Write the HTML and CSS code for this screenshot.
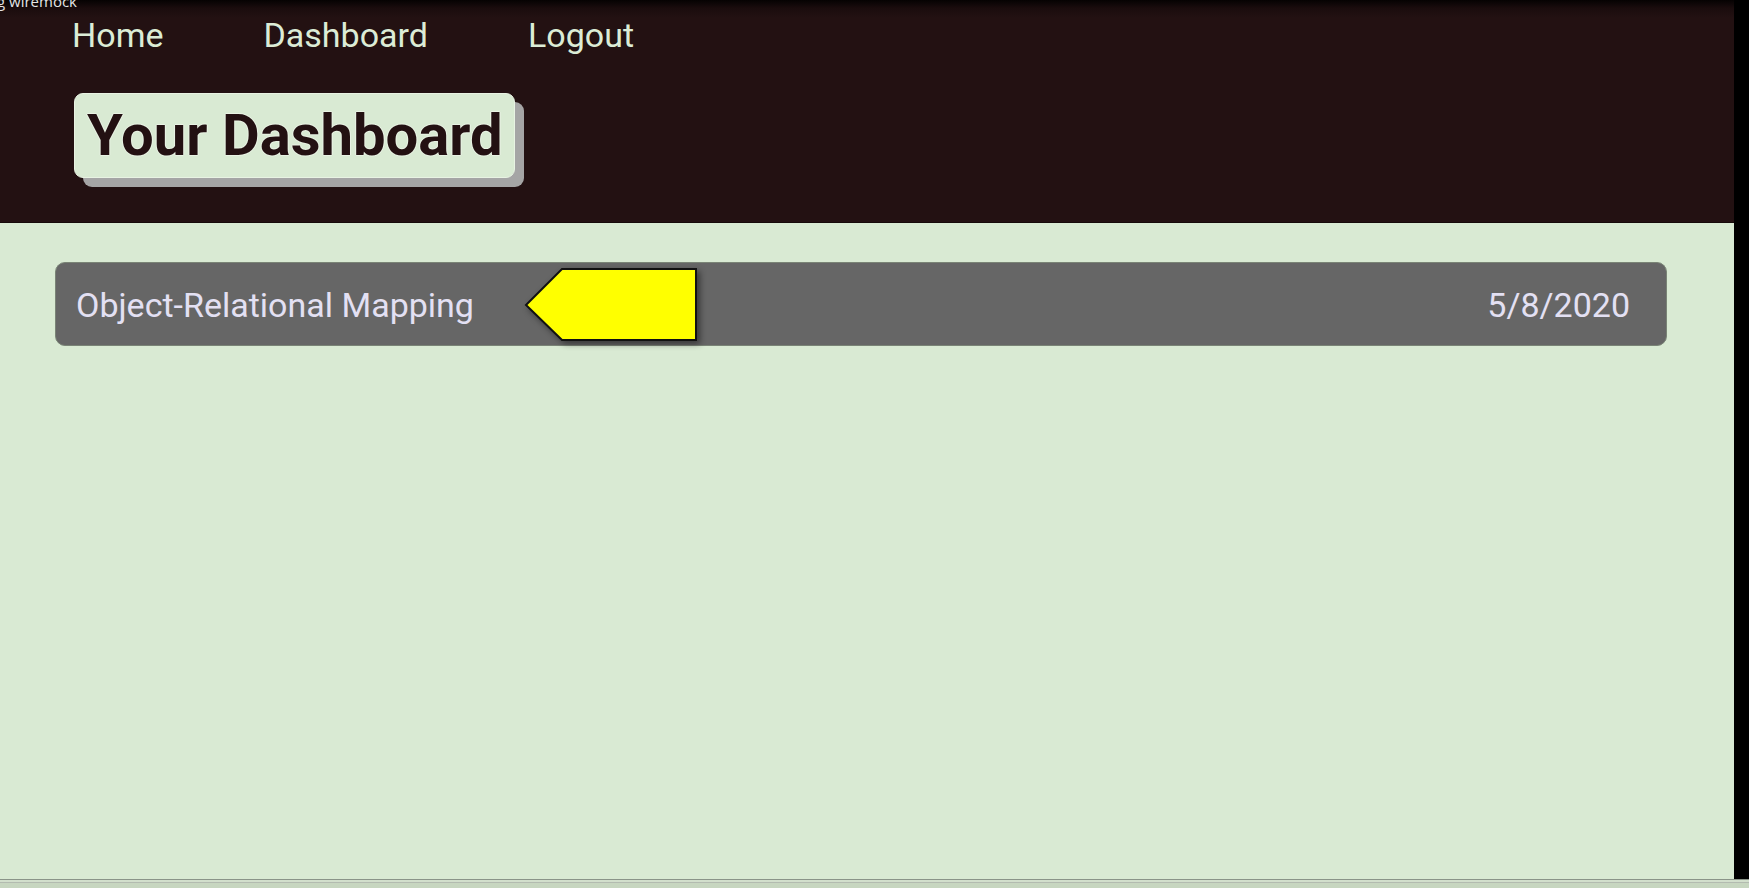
FILE: index.html
```html
<!DOCTYPE html>
<html lang="en">
<head>
<meta charset="utf-8">
<title>Your Dashboard</title>
<link rel="stylesheet" href="styles.css">
</head>
<body>
<div class="screen">
  <div class="window">
    <div class="app">
      <header class="header">
        <span class="caption">g wiremock</span>
        <nav class="nav">
          <a class="nav-link" href="#">Home</a>
          <a class="nav-link" href="#">Dashboard</a>
          <a class="nav-link" href="#">Logout</a>
        </nav>
        <h1 class="title">Your Dashboard</h1>
      </header>
      <main class="content">
        <div class="row">
          <span class="row-name">Object-Relational Mapping</span>
          <span class="row-date">5/8/2020</span>
          <svg class="pointer" width="176" height="78" viewBox="0 0 176 78">
            <polygon points="2,38 38,2 172,2 172,73 38,73" fill="#ffff00" stroke="#111" stroke-width="2" stroke-linejoin="miter"/>
          </svg>
        </div>
      </main>
    </div>
    <div class="strip"></div>
  </div>
  <div class="bottom-edge"></div>
</div>
</body>
</html>
```

FILE: styles.css
```css
html, body {
  margin: 0;
  padding: 0;
  height: 100%;
}

body {
  font-family: Roboto, "Liberation Sans", sans-serif;
  background: #000;
  overflow: hidden;
}

.screen {
  display: flex;
  flex-direction: column;
  height: 888px;
}

.window {
  flex: 1;
  display: flex;
  min-height: 0;
}

.app {
  flex: 1;
  display: flex;
  flex-direction: column;
  background: #d9ead3;
}

.strip {
  width: 15px;
  background: #000;
}

.header {
  position: relative;
  height: 223px;
  box-sizing: border-box;
  padding: 15px 0 0 72px;
  background: linear-gradient(to bottom, #050202 0px, #1a0c0d 8px, #231112 18px, #231112 100%);
  border-bottom: 1px solid #160a0a;
}

.caption {
  position: absolute;
  top: -9px;
  left: -3px;
  font-family: "Open Sans", "Liberation Sans", sans-serif;
  font-size: 15px;
  color: #e4e4e4;
  line-height: 20px;
}

.nav {
  display: flex;
  gap: 100px;
  height: 40px;
}

.nav-link {
  font-size: 34px;
  line-height: 40px;
  color: #dcecd6;
  text-decoration: none;
}

.title {
  display: inline-block;
  margin: 38px 0 0 2px;
  padding: 7px 11px 8px 12px;
  font-size: 58px;
  line-height: 68px;
  font-weight: 700;
  color: #231112;
  background: #d9ead3;
  border-radius: 9px;
  box-shadow: 9px 9px 0 #a5a5a5;
  border: 1px solid #e8f3e3;
  text-shadow: 1px 0 0 #e9f3e4, -1px 0 0 #e9f3e4, 0 1px 0 #e9f3e4, 0 -1px 0 #e9f3e4;
}

.content {
  flex: 1;
  padding: 39px 67px 0 55px;
}

.row {
  position: relative;
  display: flex;
  justify-content: space-between;
  align-items: flex-start;
  height: 84px;
  box-sizing: border-box;
  padding: 22px 36px 0 20px;
  background: #666666;
  border-radius: 10px;
  border: 1px solid #7a8476;
  font-size: 34px;
  line-height: 40px;
  color: #e3e0f3;
}

.pointer {
  position: absolute;
  left: 468px;
  top: 4px;
  filter: drop-shadow(3px 3px 3px rgba(0, 0, 0, 0.45));
}

.bottom-edge {
  height: 9px;
  background: #c7d6c0;
  border-top: 1px solid #8a9488;
  box-sizing: border-box;
  box-shadow: inset 0 2px 0 #d2dfcc, inset 0 3px 0 #b3bbb0;
}
```
